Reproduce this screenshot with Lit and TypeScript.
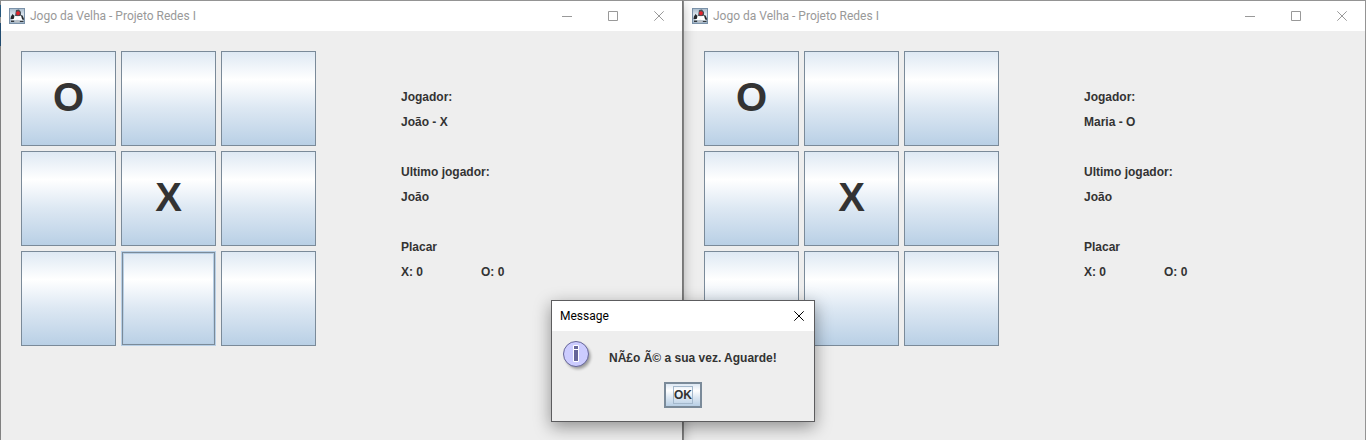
import { LitElement, html, css, svg } from "lit";
import { customElement, property, state } from "lit/decorators.js";

@customElement("java-icon")
class JavaIcon extends LitElement {
  static styles = css`
    :host { display: block; width: 16px; height: 16px; }
    svg { display: block; }
  `;
  render() {
    return html`<svg width="16" height="16" viewBox="0 0 16 16" aria-hidden="true">
      <defs>
        <linearGradient id="sky" x1="0" y1="0" x2="0" y2="1">
          <stop offset="0" stop-color="#a9bccd" /><stop offset="0.4" stop-color="#dbe5ee" /><stop offset="1" stop-color="#9fb3c6" />
        </linearGradient>
      </defs>
      <rect x="0.5" y="0.5" width="15" height="15" fill="url(#sky)" stroke="#7b92a9" />
      <path d="M7 2 L10 1.5 L12 4 L12 8 L6 8 Z" fill="#4a4f56" />
      <path d="M1.5 11 L2 8.5 L3.5 6 L5 7.5 L6 8 L5.5 11 Z M11.5 7 L13.5 7.500 L15 11 L14.5 12 L11.5 11 Z" fill="#23272b" />
      <path d="M5.5 7.5 Q8.5 9.5 12 7.5 L13 11 L14 13 L11 12.5 Q8 11 5.5 12.5 L2 12.5 L5 10.5 Z" fill="#ffffff" />
      <path d="M2 12.5 H5.5 L5 14 H2 Z M10.5 12.8 H14.5 V14 H11 Z" fill="#33383c" />
      <path d="M6 13 Q8.500 11.500 10.500 13 L10 14.500 H6 Z" fill="#b9bfc4" />
      <path d="M7 4.500 L9 3 L11 4.500 L10.500 6.500 L9 7.500 L7.500 6.500 Z" fill="#e3232c" />
    </svg>`;
  }
}

const glyphs = {
  minimize: svg`<path d="M0 5.5H10" />`,
  maximize: svg`<path d="M0.5 0.5H9.5V9.5H0.5Z" />`,
  close: svg`<path d="M0.3 0.3L9.7 9.7M9.7 0.3L0.3 9.7" />`,
};

@customElement("game-window")
class GameWindow extends LitElement {
  @property() player = "";
  @property() last = "";
  @property({ type: Number }) focused = -1;
  @property({ attribute: false }) cells: string[] = [];

  static styles = css`
    :host {
      display: flex; flex-direction: column; flex: 1; box-sizing: border-box;
      border: 1px solid #949494; border-bottom: 0; background: #eeeeee padding-box;
      font: bold 12px/25px "Liberation Sans", Arial, sans-serif; color: #333333;
    }
    .bar { display: flex; align-items: center; height: 30px; padding-left: 8px; background: #ffffff; }
    .title { flex: 1; margin: 0 0 0 5px; font: 12px/16px Roboto, "Segoe UI", sans-serif; color: #999999; }
    .ctl {
      display: flex; align-items: center; justify-content: center;
      width: 46px; height: 30px; padding: 0; border: 0; background: none;
    }
    .ctl svg { fill: none; stroke: #999999; overflow: visible; }
    .body { display: flex; gap: 85px; padding: 20px; }
    .board { display: grid; grid-template-columns: repeat(3, 95px); grid-auto-rows: 95px; gap: 5px; }
    .cell {
      padding: 0 0 4px; border: 1px solid #7a8a99; color: #333333;
      background: linear-gradient(#dde8f3, #ffffff 30%, #dde8f3 60%, #b8cfe5) border-box;
      font: bold 40px/46px "Liberation Sans", Arial, sans-serif;
    }
    .cell.hover { border-color: #b8cfe5; box-shadow: inset 0 0 0 1px #7a8a99, inset 0 0 0 2px #b8cfe5; }
    .info { margin: 0; padding-top: 34px; }
    .info dt, .info dd { margin: 0; }
    .info dd { margin-bottom: 25px; }
    .score { display: grid; grid-template-columns: 80px auto; }
  `;

  render() {
    return html`
      <header class="bar">
        <java-icon></java-icon>
        <h1 class="title">Jogo da Velha - Projeto Redes I</h1>
        ${(["minimize", "maximize", "close"] as const).map(
          (k) => html`<button class="ctl" aria-label=${k}><svg width="10" height="10">${glyphs[k]}</svg></button>`
        )}
      </header>
      <main class="body">
        <div class="board">
          ${this.cells.map(
            (c, i) => html`<button class="cell ${i === this.focused ? "hover" : ""}" aria-label="${i + 1} ${c}">${c}</button>`
          )}
        </div>
        <dl class="info">
          <dt>Jogador:</dt><dd>${this.player}</dd>
          <dt>Ultimo jogador:</dt><dd>${this.last}</dd>
          <dt>Placar</dt><dd class="score"><span>X: 0</span><span>O: 0</span></dd>
        </dl>
      </main>`;
  }
}

@customElement("message-dialog")
class MessageDialog extends LitElement {
  static styles = css`
    .box {
      position: absolute; z-index: 2; top: 300px; left: 50%; transform: translateX(-50%);
      box-sizing: border-box; width: 264px; margin: 0; padding: 0; border: 1px solid #5c5c5e;
      background: #eeeeee; color: #333333; box-shadow: 0 5px 16px rgba(0, 0, 0, 0.4);
      font: bold 12px/16px "Liberation Sans", Arial, sans-serif;
    }
    .bar { display: flex; align-items: center; height: 30px; padding-left: 8px; background: #ffffff; }
    .title { flex: 1; margin: 0; font: 12px/16px Roboto, "Segoe UI", sans-serif; color: #000000; }
    .close { display: flex; align-items: center; justify-content: center; width: 30px; height: 30px; padding: 0; border: 0; background: none; }
    .close svg { fill: none; stroke: #000000; overflow: visible; }
    .row { display: flex; align-items: center; gap: 15px; padding: 9px 10px 0; }
    .text { margin: 0; padding-top: 4px; }
    .row svg { display: block; }
    .foot { display: flex; justify-content: center; padding: 10px 0 13px; }
    .ok {
      padding: 3px 8px; border: 2px solid #7a8a99; color: #333333;
      background: linear-gradient(#dde8f3, #ffffff 30%, #dde8f3 60%, #b8cfe5);
      font: bold 12px/16px "Liberation Sans", Arial, sans-serif;
    }
    .ring { display: block; outline: 1px solid #a3b8cc; }
  `;

  @state() open = true;

  render() {
    return html`<dialog class="box" ?open=${this.open} aria-labelledby="t">
      <header class="bar">
        <h2 class="title" id="t">Message</h2>
        <button class="close" aria-label="Close" @click=${() => (this.open = false)}>
          <svg width="10" height="10">${glyphs.close}</svg>
        </button>
      </header>
      <div class="row">
        <svg width="32" height="32" viewBox="0 0 32 32" aria-hidden="true">
          <defs><filter id="soft" x="-30%" y="-30%" width="160%" height="160%"><feGaussianBlur stdDeviation="1.5" /></filter></defs>
          <circle cx="16" cy="16.5" r="12.5" fill="#000000" opacity="0.35" filter="url(#soft)" />
          <circle cx="14" cy="14" r="12.5" fill="#ccccff" stroke="#666699" />
          <path d="M11.5 5.5H16.5V9.5H11.5ZM11.5 9.5H16.5V21.5H11.5Z" fill="#666699" stroke="#ffffff" />
        </svg>
        <p class="text">NÃ£o Ã© a sua vez. Aguarde!</p>
      </div>
      <div class="foot">
        <button class="ok" @click=${() => (this.open = false)}><span class="ring">OK</span></button>
      </div>
    </dialog>`;
  }
}

@customElement("app-root")
class AppRoot extends LitElement {
  static styles = css`
    :host {
      display: flex; min-height: 100vh; position: relative; overflow: hidden;
      background: linear-gradient(
        #949494 5px, #2d6590 5px, #2d6590 17px, #b4b4b4 17px, #b4b4b4 23px,
        #285a85 23px, #285a85 46px, #999999 46px
      );
    }
    .front { position: relative; z-index: 1; border-left-color: transparent; border-right-color: #777777; box-shadow: 0 4px 12px rgba(0, 0, 0, 0.3); }
  `;
  cells = ["O", "", "", "", "X", "", "", "", ""];
  render() {
    return html`
      <game-window class="front" player="João - X" last="João" focused="7" .cells=${this.cells}></game-window>
      <game-window player="Maria - O" last="João" .cells=${this.cells}></game-window>
      <message-dialog></message-dialog>`;
  }
}
